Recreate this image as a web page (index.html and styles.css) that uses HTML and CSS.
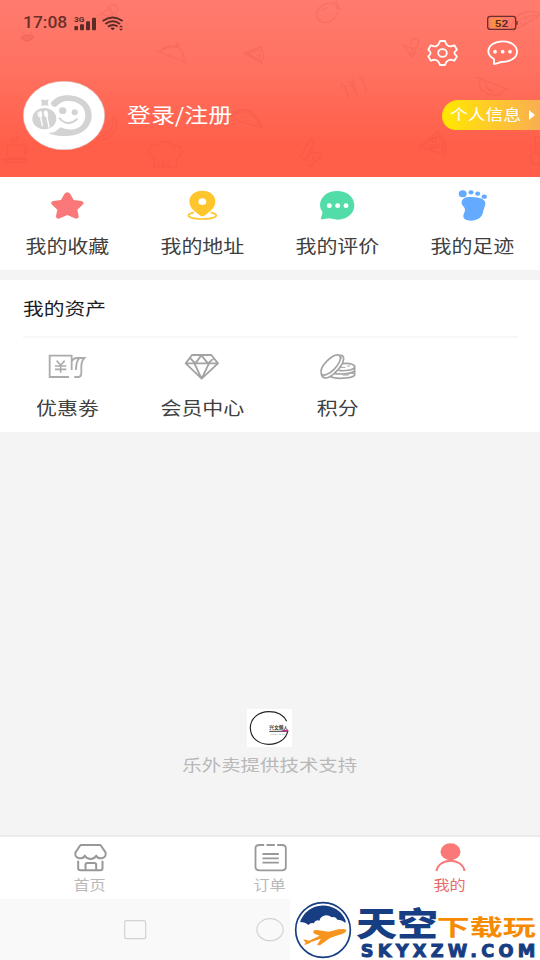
FILE: index.html
```html
<!DOCTYPE html>
<html lang="zh-CN">
<head>
<meta charset="utf-8">
<title>我的</title>
<link rel="stylesheet" href="styles.css">
</head>
<body>
<div class="screen">
  <header class="hero">
    <svg class="hero-pattern" viewBox="0 0 1620 534" aria-hidden="true">
      <g fill="none" stroke="#d94a40" stroke-opacity=".18" stroke-width="4" stroke-linejoin="round">
        <path d="M298 43l34-18 7 24zM325 20q16-14 26 0t-16 22zM351 44l-12 24M298 43l-8 6"/>
        <path d="M62 112q22-14 41-2l-16 14q-20-2-25-12M78 108l-10-14M86 106l10-10" fill="#d94a40" fill-opacity=".2"/>
        <path d="M465 150l96 39M480 153q26-22 54-12 22 18 18 44M490 150q18-14 38-8"/><circle cx="533" cy="134" r="5"/>
        <path d="M732 160l50-20q16 22 2 48zM741 160l36-12q8 14 1 31zM758 158h8M770 166h8"/>
        <path d="M690 348q62-50 98 34q-50-6-98-34M702 346q52-30 76 28M722 352h8M738 362h8M746 346h8"/>
        <path d="M288 412q60-6 50-62q20 10 8 38-20 38-58 30M300 400l10-4M322 376l6-8"/>
        <path d="M22 436h52v26q0 10-12 12H34q-12-2-12-12zM74 440q12 2 8 16-4 6-10 6M10 478h72l-8 8H18zM40 430q-6-8 2-14M50 428q-4-10 4-20"/>
        <path d="M462 500v-28q-20-6-14-24 8-16 24-12 24-24 48 2 22-4 26 14 0 16-16 22v26zM476 482v14M490 480v16M504 482v14"/>
        <path transform="translate(544 0)" d="M455 10q28 2 13 30-14 30-40 28-26-6-21-34 12-26 48-24zM422 32q6-10 18-8M456 20q-4-14 8-16 10 10 0 20l20 4"/>
        <path transform="translate(542 0)" d="M668 135l38 15-12 22zM690 134q-2-16 12-18 16 0 10 18l-10 12M690 140l8 24h8"/>
        <path transform="translate(540 0) rotate(-25 520 264)" d="M486 252q8-24 16 0l-6 14v22M514 240v16q8 8 14 0v-16M521 240v50M548 240q12 10 4 28v22"/>
        <path d="M1430 232l98 38M1440 240q-10 36 42 46 26 0 32-18M1456 254q6 18 28 20M1466 284l-6 6"/>
        <path d="M1536 96q-8-44 42-60 34-6 42 8zM1548 84q0-34 62-38M1560 66l6 6M1576 54l6 6M1570 78l6-4M1592 60l6 2"/>
        <path d="M1256 440l56-44q32 24 22 68zM1266 438l48-32q20 20 12 50"/><circle cx="1303" cy="420" r="7"/><circle cx="1296" cy="441" r="6"/><circle cx="1312" cy="438" r="6"/>
        <path d="M900 470l24-40 10-14 8 4-4 18-20 42zM934 456l30 4q-2 20-22 24zM942 484l-6 14-10-2"/>
        <path d="M1600 410h20M1606 412v40"/><circle cx="1610" cy="475" r="19"/>
      </g>
    </svg>
    <div class="status">
      <span class="clock">17:08</span>
      <svg class="signal" viewBox="216 39 159 54">
        <g fill="#5a2b27"><text x="222" y="63" font-size="19" font-weight="700" font-family="Roboto" textLength="31" lengthAdjust="spacingAndGlyphs">3G</text>
        <rect x="223" y="75" width="11" height="13" rx="3"/><rect x="240" y="70" width="12" height="18" rx="3"/><rect x="258" y="61" width="12" height="27" rx="3"/><rect x="276" y="50" width="12" height="38" rx="3"/>
        <path d="M331 82q7-5 14 0l-7 6zM357 79l6-6 6 6zM357 83h12l-6 6z"/></g>
        <g fill="none" stroke="#5a2b27" stroke-width="6"><path d="M308 60q30-21 60 0M316 69q22-16 44 0M324 77q14-10 29-1"/></g>
      </svg>
      <svg class="battery" viewBox="648 45 99 48">
        <rect x="662" y="55" width="34" height="28" fill="#f99042"/>
        <rect x="653" y="49" width="84" height="39" rx="8" fill="none" stroke="#6b302b" stroke-width="4"/><path d="M739 63h4v11h-4z" fill="#6b302b"/>
        <text x="674" y="80" font-size="29" font-weight="700" fill="#5a2b27" font-family="Roboto" textLength="41" lengthAdjust="spacingAndGlyphs">52</text>
      </svg>
    </div>
    <div class="actions">
      <svg class="action" viewBox="468 117 99 84"><g fill="none" stroke="#fff" stroke-width="5.500" stroke-linejoin="round"><path d="M510 123h15q3 10 7 13 6 4 10 3l11-3 8 13q-8 7-8 10t8 10l-8 13-11-3q-5 0-10 4-4 3-7 12h-15q-3-9-7-12-5-4-10-4l-11 3-7-13q7-7 7-10t-7-10l7-13 11 3q5 1 10-3 4-3 7-13z"/><ellipse cx="517.500" cy="159" rx="13" ry="11.500"/></g></svg>
      <svg class="action" viewBox="648 117 99 84"><path d="M672 192v-15q-17-9-17-23c1-18 19-30 43-30 26 0 43 14 43 31 0 18-19 31-47 31-8 2-13 5-22 6z" fill="none" stroke="#fff" stroke-width="5.500" stroke-linejoin="round"/><g fill="#fff"><circle cx="675" cy="155" r="5.500"/><circle cx="698" cy="155" r="5.500"/><circle cx="720" cy="155" r="5.500"/></g></svg>
    </div>
    <div class="profile">
      <svg class="avatar" viewBox="24 18 246 207">
        <ellipse cx="147" cy="121.500" rx="122" ry="103" fill="#fff" stroke="#d9c5c2" stroke-width="2"/>
        <path d="M107 85C119 68 137 61 157 61c42 0 73 25 73 60 0 37-32 62-74 62-25 0-47-3-56-10 16 1 22-2 25-7l12-9c42 18 74-3 74-36 0-30-27-46-56-43-18 1-24 13-33 17-5 3-12-2-15-10z" fill="#d3d3d3"/>
        <g fill="#d3d3d3"><ellipse cx="88" cy="131" rx="36" ry="32"/><ellipse cx="143" cy="107" rx="11" ry="10"/><ellipse cx="179" cy="112" rx="9" ry="9"/><path d="M78 73q12 5 23 0-5 10 0 20-12-5-23 0 5-10 0-20z"/></g>
        <path d="M134 130q24 27 52 3" fill="none" stroke="#d3d3d3" stroke-width="6" stroke-linecap="round"/>
        <g fill="none" stroke="#fff" stroke-linecap="round"><path d="M69 114l3 10q4 4 8-2l-2-12M74 111l8 41M95 120l7 36" stroke-width="4"/><path d="M92 113l2 7" stroke-width="12"/></g>
      </svg>
      <a class="login"><span class="wide">登录/注册</span></a>
      <a class="info"><span class="wide">个人信息</span><svg class="arrow" viewBox="0 0 6 10"><path d="M0 0l6 5-6 5z" fill="#fff"/></svg></a>
    </div>
  </header>

  <nav class="grid quick">
    <a class="cell"><svg class="icon" viewBox="135 27 135 108"><path d="M193 48q9-11 18 0l10 18 23 3q12 3 3 12l-15 14 4 20q0 10-12 6l-22-10-22 10q-12 4-12-6l4-20-15-14q-9-9 3-12l23-3z" fill="#fb7878"/></svg><span class="wide">我的收藏</span></a>
    <a class="cell"><svg class="icon" viewBox="540 27 135 108"><path fill-rule="evenodd" d="M607 38c23 0 39 14 39 32 0 13-6 22-15 29l-18 14q-6 4-12 0l-18-14c-9-7-15-16-15-29 0-18 16-32 39-32zm0 23c-7 0-12 4-12 10s5 10 12 10 12-4 12-10-5-10-12-10z" fill="#ffc52c"/><path d="M580 104c-30 7-11 19 27 19s57-12 27-19" fill="none" stroke="#ffc52c" stroke-width="5" stroke-linecap="round"/></svg><span class="wide">我的地址</span></a>
    <a class="cell"><svg class="icon" viewBox="135 27 135 108"><path d="M201 39c30 0 52 18 52 43s-22 43-50 43c-11 0-18-4-26-4l-20 3c-6 0-4-4-3-8l4-13q-8-9-8-21c0-25 22-43 51-43z" fill="#52dca7"/><g fill="#fff"><ellipse cx="178" cy="83" rx="7.500" ry="7"/><ellipse cx="203" cy="83" rx="7.500" ry="7"/><ellipse cx="228" cy="83" rx="7.500" ry="7"/></g></svg><span class="wide">我的评价</span></a>
    <a class="cell"><svg class="icon" viewBox="540 27 135 108"><g fill="#64aaff"><ellipse cx="578" cy="47" rx="12" ry="10.500"/><ellipse cx="603" cy="43" rx="7.500" ry="6.500"/><ellipse cx="623" cy="47" rx="7.500" ry="6.500"/><ellipse cx="643" cy="56" rx="8" ry="6.500"/><path d="M575 71c3-12 14-15 30-14 24 1 40 6 41 18 1 8-5 15-7 28-3 16-17 25-36 25-14 0-23-5-23-14 0-8 5-11 5-19 0-10-12-12-10-24z"/></g></svg><span class="wide">我的足迹</span></a>
  </nav>

  <section class="assets">
    <h2 class="title"><span class="wide">我的资产</span></h2>
    <div class="grid">
      <a class="cell"><svg class="icon" viewBox="135 210 135 108"><g fill="none" stroke="#acacac" stroke-width="5.500"><path d="M207 291h-58v-64h66v43M215 244q6-10 15-10h23q-9 9-9 26v20q0 11-8 11h-13M228 270c0-17 3-29 10-36"/><path d="M170 242l12 14 12-14M165 258h34M165 268h34M182 256v22" stroke-width="5"/></g></svg><span class="wide">优惠劵</span></a>
      <a class="cell"><svg class="icon" viewBox="540 210 135 108"><path d="M576 225h58l20 25-49 46-48-46zM557 250h97M571 235l15 15 18-24 20 24 17-15M583 250l22 46 22-46" fill="none" stroke="#a3a3a3" stroke-width="5.500" stroke-linejoin="round"/></svg><span class="wide">会员中心</span></a>
      <a class="cell"><svg class="icon" viewBox="135 210 135 108"><g fill="none" stroke="#a3a3a3" stroke-width="5" stroke-linejoin="round"><path d="M209 226c-9-4-24 3-37 16-14 14-21 30-18 39 5 9 24 2 38-13 15-15 24-34 17-42z"/><path d="M209 226q12-1 12 10c-1 15-13 31-27 43-11 10-20 15-27 15q-12-1-13-13M210 232l5 4"/><path d="M219 251c24-3 36 5 35 10-2 10-33 13-48 10M254 261v23c-1 8-27 11-46 11q-18 0-28-6M254 273q-15 12-62 8"/><path d="M208 262h18M232 258h8M218 285h18M246 281h5" stroke-width="3"/></g></svg><span class="wide">积分</span></a>
    </div>
  </section>

  <footer class="support">
    <svg class="brand" viewBox="231 27 135 114"><rect x="231" y="27" width="135" height="114" fill="#fff"/><path d="M350 64c-9-18-28-29-53-29-33 0-56 21-56 49s23 49 56 49c28 0 51-15 56-39" fill="none" stroke="#252525" stroke-width="3.500"/><text x="298" y="86" font-size="13" font-weight="700" font-family="Noto Sans CJK SC" fill="#333" textLength="56" lengthAdjust="spacingAndGlyphs">兴文懒人</text><path d="M298 94h57" stroke="#444" stroke-width="3"/><path d="M337 92h18" stroke="#d0278b" stroke-width="4"/><text x="299" y="104" font-size="8" font-family="Liberation Serif" fill="#666" textLength="48" lengthAdjust="spacingAndGlyphs">XING WEN</text></svg>
    <span class="wide">乐外卖提供技术支持</span>
  </footer>

  <nav class="tabs">
    <a class="tab"><svg class="tab-icon" viewBox="202.500 30 135 99"><g fill="none" stroke="#999" stroke-width="6" stroke-linejoin="round"><path d="M240 45h60l15 22c6 18-20 24-28 10-7 13-26 13-34 0-8 14-34 8-28-10zM233 92v23q0 6 7 6h60q6 0 6-6V92M255 121v-17q0-5 6-5h20q6 0 6 5v17"/></g></svg><span class="wide">首页</span></a>
    <a class="tab"><svg class="tab-icon" viewBox="742.500 30 135 99"><g fill="none" stroke="#999" stroke-width="5.500"><path d="M791 45h-14q-12 0-12 10v56q0 10 12 10h67q12 0 12-10V55q0-10-12-10h-14M798 45h25M786 72h49M786 85h49M786 98h49"/></g></svg><span class="wide">订单</span></a>
    <a class="tab active"><svg class="tab-icon" viewBox="427.500 30 135 99"><ellipse cx="495" cy="65" rx="30" ry="25.500" fill="#fb7878"/><path d="M453 123c3-19 21-31 42-31s39 12 42 31" fill="none" stroke="#fb7878" stroke-width="6"/></svg><span class="wide">我的</span></a>
  </nav>

  <div class="system">
    <svg class="system-keys" viewBox="0 207 870 183"><g fill="none" stroke="#d2d2d2" stroke-width="3.500"><rect x="374" y="272" width="63" height="54" rx="6"/><ellipse cx="810" cy="299" rx="39.500" ry="33"/></g></svg>
    <svg class="watermark" viewBox="15 207 750 183">
      <rect x="15" y="207" width="750" height="183" fill="#fff"/>
      <circle cx="114" cy="300" r="82" fill="#fff" stroke="#173d82" stroke-width="5"/>
      <path d="M45 276a73 73 0 0 1 137-4q1 4-2 6-9-9-23-9-4-10-17-7-13-11-27-3-8 4-10 13-11-4-17 8-9-3-16 5-9-9-25-9z" fill="#173d82"/>
      <path d="M86 302q3-3 9-2l36 5 30-7q24-4 23 5-5 8-23 12l-26 9-29 21q-12 3-8-3l10-16-28 9q-11 9-21 9-4-2 4-5l-8-10q6-2 10 1 6 3 12 0l27-13-16-6q-6-4-2-9z" fill="#f7941d"/>
      <text x="213" y="318" class="mark-main" textLength="246" lengthAdjust="spacingAndGlyphs">天空</text>
      <text x="455" y="316" class="mark-sub" textLength="297" lengthAdjust="spacingAndGlyphs">下载玩</text>
      <text x="227" y="380" class="mark-url" textLength="524" lengthAdjust="spacing">SKYXZW.COM</text>
    </svg>
  </div>
</div>
</body>
</html>
```
FILE: styles.css
```css
* { box-sizing: border-box; }
body { margin: 0; font-family: "Noto Sans CJK SC", sans-serif; color: #404040; }
svg { display: block; flex: none; }
.screen { width: 540px; height: 960px; display: flex; flex-direction: column; background: #f4f4f4; overflow: hidden; }
/* Labels use horizontally extended glyphs. */
.wide { display: inline-block; white-space: nowrap; transform: scaleX(1.185); }

.hero { position: relative; height: 177px; flex: none; background: linear-gradient(#ff7c6e 0%, #ff705f 42%, #ff5f49 82%, #ff5e48 100%); }
.hero-pattern { position: absolute; inset: 0; width: 540px; height: 178px; }
.status { position: relative; display: flex; align-items: center; height: 38px; padding: 7px 21px 0 23px; }
.clock { font: 500 16px/18px Roboto, sans-serif; color: #6b302b; width: 49px; transform: scaleX(1.09); transform-origin: left; padding-top: 1px; }
.signal { width: 53px; height: 18px; }
.battery { width: 33px; height: 16px; margin-left: auto; }
.actions { position: relative; display: flex; justify-content: flex-end; gap: 27px; padding: 1px 21px 0 0; }
.action { width: 33px; height: 28px; }
.profile { position: relative; display: flex; align-items: center; height: 69px; margin: 14px 0 0 23px; }
.avatar { width: 82px; height: 69px; }
.login { margin: -2px 0 0 22px; color: #fff; font-size: 20.2px; line-height: 28px; }
.login .wide, .info .wide, .title .wide { transform-origin: left; }
.info { display: flex; align-items: center; width: 98px; height: 30px; margin: -2px 0 0 auto; padding-left: 8px; border-radius: 18px 0 0 15px; background: linear-gradient(90deg, #ffe800, #ffce26 45%, #f9ae52); color: #fff; font-size: 15px; line-height: 22px; }
.info .wide { margin-top: -2px; }
.arrow { width: 6px; height: 10px; margin: 0 5px 0 auto; }

.grid { display: grid; grid-template-columns: repeat(4, 135px); }
.cell { display: flex; flex-direction: column; align-items: center; font-size: 17.7px; line-height: 26px; }
.icon { width: 45px; height: 36px; }
.quick { height: 93px; flex: none; padding-top: 10px; background: #fff; }
.quick .cell { gap: 9px; }
.assets { height: 152px; flex: none; margin-top: 10px; background: #fff; }
.title { height: 58px; margin: 0 22px 0 23px; padding-top: 15px; border-bottom: 2px solid #f7f7f7; color: #1c1c1c; font-size: 17.5px; font-weight: 400; line-height: 26px; }
.assets .grid { padding-top: 12px; }
.assets .cell { gap: 8px; }

.support { flex: 1; display: flex; flex-direction: column; align-items: center; justify-content: flex-end; padding-bottom: 59px; gap: 5px; color: #b8b8b8; font-size: 16.4px; line-height: 24px; }
.brand { width: 45px; height: 38px; margin-right: 2px; }
.tabs { height: 64px; flex: none; display: grid; grid-template-columns: repeat(3, 1fr); background: #fff; border-top: 2px solid #ebebeb; }
.tab { display: flex; flex-direction: column; align-items: center; padding-top: 3px; gap: 1px; color: #b9b9b9; font-size: 13.6px; line-height: 20px; }
.tab-icon { width: 45px; height: 33px; }
.active { color: #e86b6b; }
.system { height: 61px; flex: none; display: flex; background: #f9f9f9; }
.system-keys { width: 290px; height: 61px; }
.watermark { width: 250px; height: 61px; }
.mark-main, .mark-sub { font-family: "Noto Sans CJK SC", sans-serif; font-weight: 900; }
.mark-main { font-size: 100px; fill: #173d82; }
.mark-sub { font-size: 66px; font-weight: 700; fill: #f68a00; }
.mark-url { font: 700 53px "DejaVu Sans", sans-serif; fill: #173d82; stroke: #173d82; stroke-width: 3px; }
```
